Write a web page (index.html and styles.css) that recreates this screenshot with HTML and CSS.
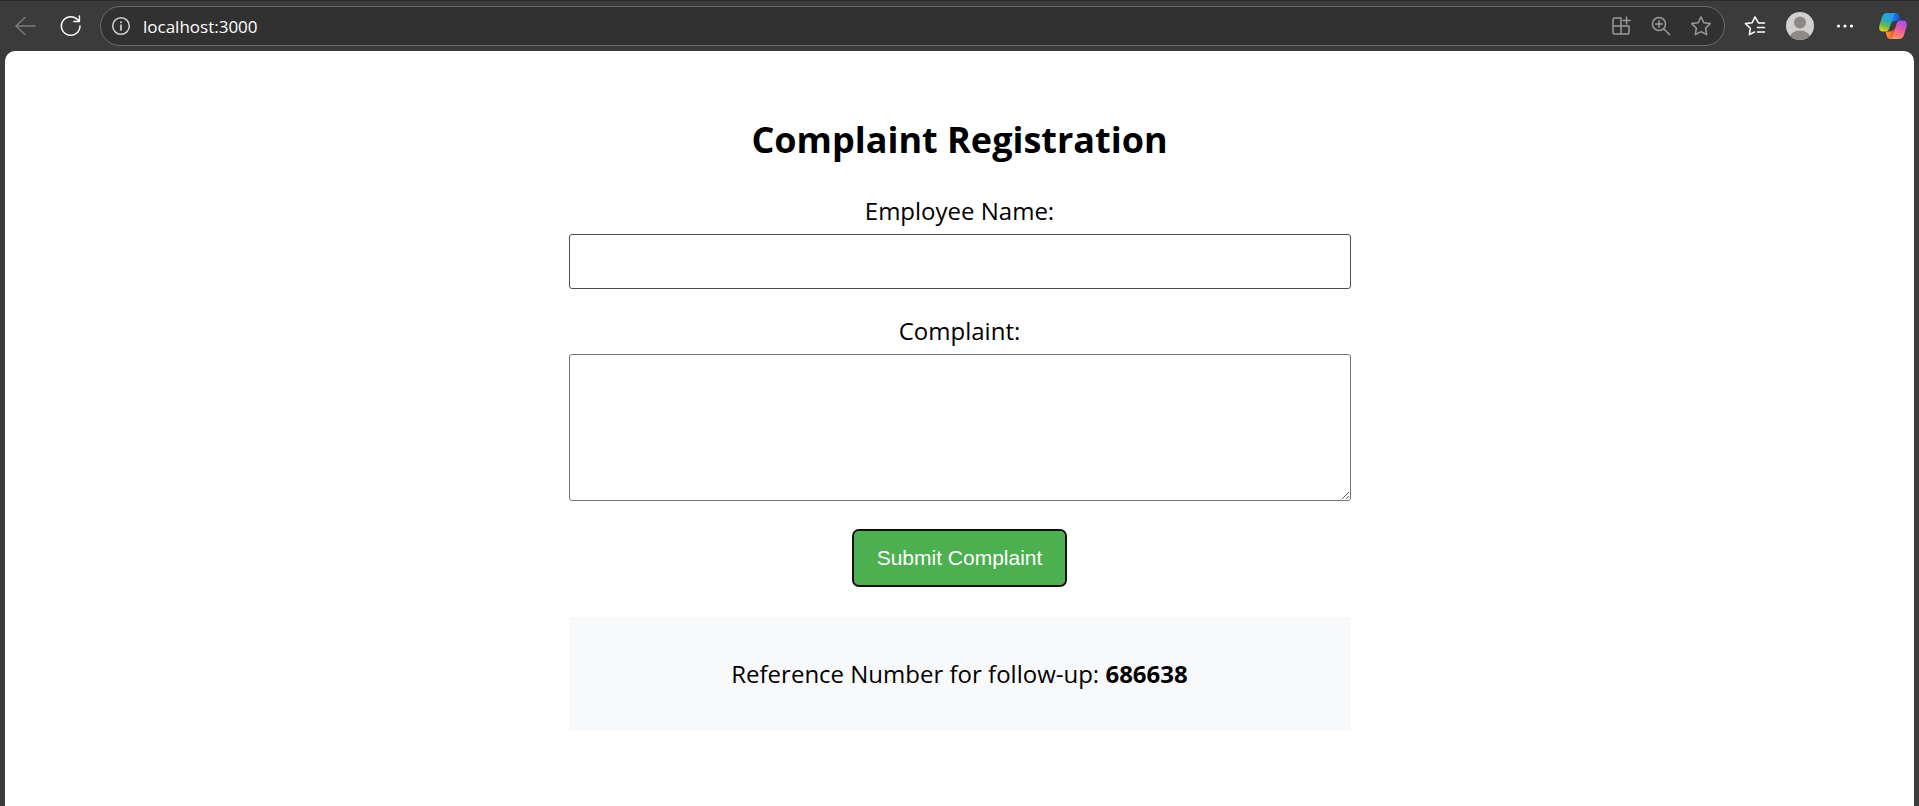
FILE: index.html
```html
<!DOCTYPE html>
<html lang="en">
<head>
<meta charset="utf-8">
<title>Complaint Registration</title>
<link rel="stylesheet" href="styles.css">
</head>
<body>
<header class="toolbar">
  <button class="tool" type="button" aria-label="Back" disabled>
    <svg class="icon dim" width="22" height="20" viewBox="0 0 22 20"><path d="M20 10H1M10 1.500L1 10l9 8.500"/></svg>
  </button>
  <button class="tool" type="button" aria-label="Refresh">
    <svg class="icon" width="22" height="22" viewBox="0 0 22 22"><path d="M20 11A9.300 9.300 0 1 1 16.500 3.700L19.200 6.200M19.400 1v5.500h-5.500"/></svg>
  </button>
  <div class="address">
    <button class="site-info" type="button" aria-label="View site information">
      <svg class="icon soft" width="20" height="20" viewBox="0 0 20 20"><circle cx="10" cy="10" r="8.300"/><path d="M10 9v5" stroke-width="1.700"/><circle class="solid" cx="10" cy="6.300" r="1"/></svg>
    </button>
    <input class="url" type="text" aria-label="Address" value="localhost:3000">
    <button class="inner-tool" type="button" aria-label="App available">
      <svg class="icon gray" width="20" height="20" viewBox="0 0 20 20"><path d="M10 2H3.500A1.500 1.500 0 0 0 2 3.500v13A1.500 1.500 0 0 0 3.500 18h13a1.500 1.500 0 0 0 1.500-1.500V10H2M10 2v16M15.500 1v7M12 4.500h7"/></svg>
    </button>
    <button class="inner-tool" type="button" aria-label="Zoom">
      <svg class="icon gray" width="20" height="20" viewBox="0 0 20 20"><circle cx="8" cy="8" r="6.500"/><path d="M12.700 12.700L18.500 18.500M8 4.700v6.600M4.700 8h6.600"/></svg>
    </button>
    <button class="inner-tool" type="button" aria-label="Add to favorites">
      <svg class="icon gray" width="22" height="22" viewBox="0 0 22 22"><path d="M11 1.800l2.800 5.900 6.400.9-4.600 4.600 1.100 6.500L11 16.600l-5.700 3.100 1.100-6.500L1.800 8.600l6.400-.9z"/></svg>
    </button>
  </div>
  <button class="tool" type="button" aria-label="Favorites">
    <svg class="icon" width="22" height="22" viewBox="0 0 22 22"><path d="M20.500 8h-6L11 1.800 8.200 7.700l-6.700.9 4.900 4.600-1.100 6.500L10.500 17M13.500 12.500h7M13.500 17h7"/></svg>
  </button>
  <button class="tool" type="button" aria-label="Profile">
    <svg width="28" height="28" viewBox="0 0 28 28"><defs><clipPath id="disc"><circle cx="14" cy="14" r="14"/></clipPath></defs><g clip-path="url(#disc)"><path fill="#d2d0ce" d="M0 0h28v28H0z"/><circle cx="14" cy="10.500" r="6" fill="#8f8a87"/><ellipse cx="14" cy="26" rx="10.500" ry="7.500" fill="#8f8a87"/></g></svg>
  </button>
  <button class="tool" type="button" aria-label="Settings and more">
    <svg width="18" height="6" viewBox="0 0 18 6" fill="#fff"><circle cx="2.500" cy="3" r="1.600"/><circle cx="9" cy="3" r="1.600"/><circle cx="15.500" cy="3" r="1.600"/></svg>
  </button>
  <button class="copilot" type="button" aria-label="Copilot">
    <svg width="28" height="26" viewBox="0 0 28 26">
      <defs>
        <linearGradient id="cool" x1="0.600" y1="0" x2="0.300" y2="1"><stop offset="0" stop-color="#1ba2f0"/><stop offset=".4" stop-color="#2aa6c0"/><stop offset=".7" stop-color="#63bd51"/><stop offset="1" stop-color="#f3cf16"/></linearGradient>
        <linearGradient id="warm" x1="0.700" y1="0" x2="0.300" y2="1"><stop offset="0" stop-color="#a34df0"/><stop offset=".5" stop-color="#ef5f9c"/><stop offset="1" stop-color="#ff9b57"/></linearGradient>
        <linearGradient id="navy" x1="0" y1="0" x2="1" y2="0"><stop offset="0" stop-color="#1c8ee8"/><stop offset="1" stop-color="#1b49cf"/></linearGradient>
        <linearGradient id="ember" x1="0" y1="0" x2="1" y2="0"><stop offset="0" stop-color="#f4a22c"/><stop offset="1" stop-color="#ed4a3f"/></linearGradient>
      </defs>
      <path fill="url(#navy)" d="M13 0h3.500c2.600 0 3.300 1.500 4 4l1 3.500h-4c-2.500 0-4.500 1.500-5.200 4z"/>
      <path fill="url(#ember)" d="M15 26h-3.500c-2.600 0-3.300-1.500-4-4l-1-3.500h4c2.500 0 4.500-1.500 5.200-4z"/>
      <path fill="url(#cool)" d="M8 0h9c-2 .4-2.600 2-3.200 4L10.500 15c-.8 2.500-2 3.500-4.500 3.500H4c-3.300 0-4.500-2.500-3.600-5.800L3 4C3.800 1.300 5.400 0 8 0z"/>
      <path fill="url(#warm)" d="M20 26h-9c2-.4 2.600-2 3.200-4L17.500 11c.8-2.500 2-3.500 4.500-3.500h2c3.300 0 4.500 2.500 3.600 5.800L25 22c-.8 2.700-2.400 4-5 4z"/>
    </svg>
  </button>
</header>
<main class="page">
  <form class="complaint">
    <h1 class="title">Complaint Registration</h1>
    <label class="label" for="name">Employee Name:</label>
    <input class="field" id="name" type="text">
    <label class="label" for="complaint">Complaint:</label>
    <textarea class="field area" id="complaint"></textarea>
    <button class="submit" type="button">Submit Complaint</button>
    <output class="result">Reference Number for follow-up: <strong>686638</strong></output>
  </form>
</main>
</body>
</html>
```

FILE: styles.css
```css
* {
  box-sizing: border-box;
}

body {
  margin: 0;
  min-height: 100vh;
  display: flex;
  flex-direction: column;
  background: #3b3b3b;
  color: #000;
  font-family: "Segoe UI", "Open Sans", "Noto Sans", sans-serif;
}

button {
  margin: 0;
  padding: 0;
  border: 0;
  background: none;
}

.toolbar {
  display: flex;
  align-items: center;
  height: 51px;
  padding-left: 3px;
  border-top: 1px solid #2b2b2b;
}

.tool,
.inner-tool,
.site-info,
.copilot {
  flex: none;
  display: flex;
  align-items: center;
  justify-content: center;
  height: 36px;
}

.tool {
  width: 45px;
}

.inner-tool,
.site-info {
  width: 40px;
}

.copilot {
  width: 52px;
}

.icon {
  fill: none;
  stroke: #fff;
  stroke-width: 1.5;
  stroke-linecap: round;
  stroke-linejoin: round;
}

.dim {
  stroke: #7c7c7c;
}

.soft {
  stroke: #d0d0d0;
}

.gray {
  stroke: #9a9a9a;
}

.solid {
  fill: #d0d0d0;
  stroke: none;
}

.address {
  flex: 1;
  display: flex;
  align-items: center;
  height: 40px;
  margin: 0 7px;
  padding-right: 3px;
  border: 1px solid #6a6a6a;
  border-radius: 20px;
  background: #313131;
}

.url {
  flex: 1;
  min-width: 0;
  padding: 0 2px;
  border: 0;
  outline: 0;
  background: none;
  color: #fff;
  font: 17px "Segoe UI", "Open Sans", "Noto Sans", sans-serif;
}

.page {
  flex: 1;
  margin: 0 5px;
  padding: 64px 20px 20px;
  border-radius: 10px 10px 0 0;
  background: #fff;
}

.complaint {
  display: flex;
  flex-direction: column;
  align-items: center;
  max-width: 782px;
  margin: 0 auto;
}

.title {
  margin: 0 0 26px;
  font-size: 36px;
  line-height: 50px;
}

.label {
  margin-bottom: 3px;
  font-size: 24px;
  line-height: 40px;
}

.field {
  width: 100%;
  height: 55px;
  margin-bottom: 22px;
  padding: 12px;
  border: 1px solid #4d4d4d;
  border-radius: 3px;
  background: #fff;
  font: 20px "Liberation Sans", Arial, sans-serif;
}

.area {
  height: 147px;
  margin-bottom: 30px;
  border-color: #767676;
  resize: vertical;
}

.submit {
  padding: 15px 23px;
  border-radius: 5px;
  outline: 2px solid #101010;
  background: #4caf50;
  color: #fff;
  font: 21px/24px "Liberation Sans", Arial, sans-serif;
}

.result {
  width: 100%;
  margin-top: 32px;
  padding: 38px 12px;
  background: #f8f9fb;
  font-size: 24px;
  line-height: 38px;
  text-align: center;
}
```
